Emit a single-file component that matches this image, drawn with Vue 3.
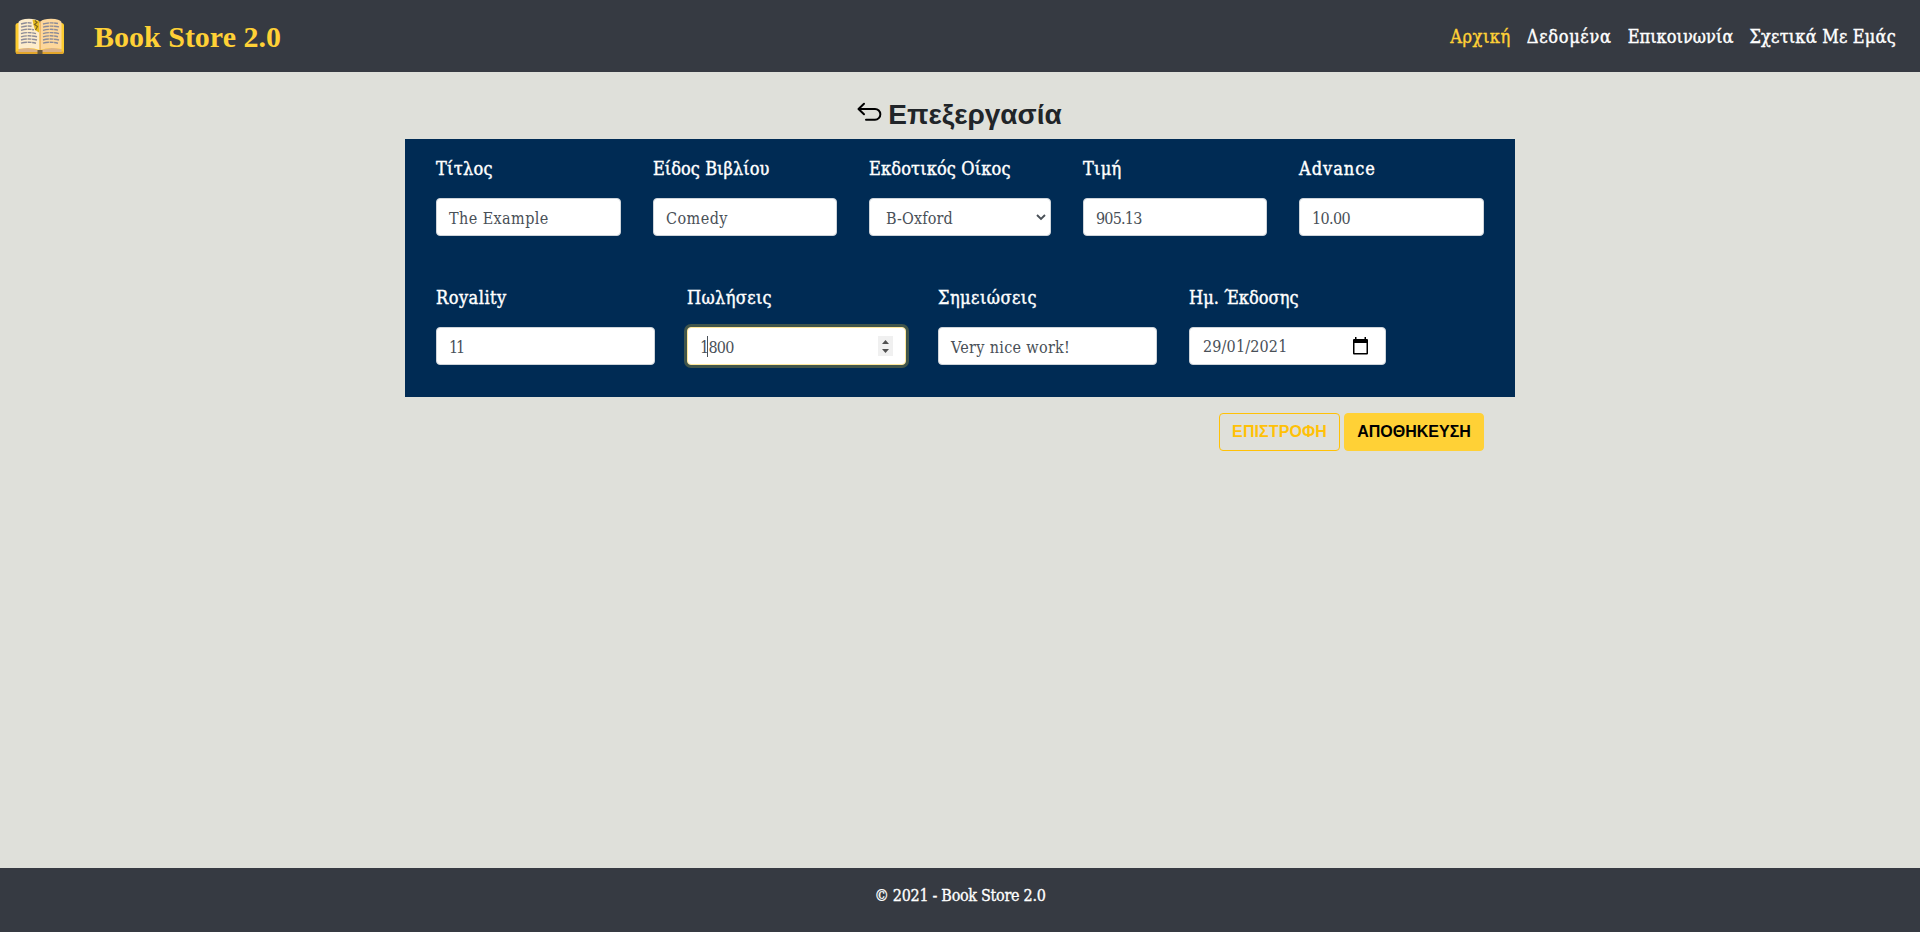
<script setup>
const links = [
  { text: 'Αρχική', active: true, track: 0.55 },
  { text: 'Δεδομένα', track: 0.7 },
  { text: 'Επικοινωνία', track: 0.05 },
  { text: 'Σχετικά Με Εμάς', track: 0.2 }
]

const rows = [
  {
    name: 'first',
    fields: [
      { label: 'Τίτλος', track: 0.3, value: 'The Example', vtrack: 0.42 },
      { label: 'Είδος Βιβλίου', track: 0.05, value: 'Comedy', vtrack: 0.45 },
      { label: 'Εκδοτικός Οίκος', track: 0.15, value: 'B-Oxford', vtrack: 0.15, kind: 'select' },
      { label: 'Τιμή', track: 0.3, value: '905.13', vtrack: -0.8 },
      { label: 'Advance', track: 0.98, value: '10.00', vtrack: -0.65 }
    ]
  },
  {
    name: 'second',
    fields: [
      { label: 'Royality', track: 0.5, value: '11', vtrack: -2.2 },
      { label: 'Πωλήσεις', track: 0.36, value: '1800', vtrack: -0.75, kind: 'number' },
      { label: 'Σημειώσεις', track: 0.46, value: 'Very nice work!', vtrack: 0.32 },
      { label: 'Ημ. Έκδοσης', track: 0.06, value: '29/01/2021', vtrack: 0.15, kind: 'date' }
    ]
  }
]
</script>

<template>
  <div class="page">
    <header class="navbar">
      <div class="brand">
        <svg class="book" width="50" height="37" viewBox="0 0 50 37">
          <rect x="0.5" y="5" width="48.500" height="31" rx="2.5" fill="#fccb2f" />
          <path d="M1 33.5h47.500v1q0 1.500-1.500 1.500H2.500Q1 36 1 34.500z" fill="#e3a62b" />
          <path d="M3.500 31.500Q14 28 24.500 33 35 28 46.500 31.500V34H3.500z" fill="#d9b18a" />
          <path d="M3.500 4Q5 1 14 .8 21.500.8 24.500 3.500V32Q16 28.500 3.500 31z" fill="#fdeccb" />
          <path d="M46.500 4Q45 1 36 .8 28 .8 25.500 3.500V32Q34 28.500 46.500 31z" fill="#fdd79b" />
          <path d="M24.500 3.500h1.500V32h-1.500z" fill="#edb96c" />
          <g fill="none" stroke="#8d8c98" stroke-width="1.400" stroke-dasharray="6 .7 4 .6">
            <path d="M6 6q6-2 11-.8M6 9.200q6-2 11-.8M6 12.400q6-2 13-.6M6 15.600q7-2 15 0M6 18.800q7-2 16 0M6 22q7-2 16 0M6 25.200q7-2 15 0" />
            <path d="M28 6q7-2 15-.5M28 9.200q7-2 16-.3M28 12.400q7-2 15-.3M28 15.600q7-2 16 0M28 18.800q7-2 15 0M28 22q7-2 16 0M28 25.200q7-2 15 0" />
          </g>
          <path d="M17.500 1.500l6.500 1.500v11.500l-4-2.500-1.500-5z" fill="#e8bd20" />
          <path d="M20 2.500l2 2-2.500 2 3 2-2 3.500" fill="none" stroke="#80681e" stroke-width="1.200" />
          <rect x="22.500" y="32" width="5" height="4" fill="#67573a" />
        </svg>
        <span class="brand-name">Book Store 2.0</span>
      </div>
      <nav class="links">
        <a
          v-for="link in links"
          :key="link.text"
          :class="{ active: link.active }"
          :style="{ letterSpacing: link.track + 'px' }"
        >{{ link.text }}</a>
      </nav>
    </header>

    <main class="container">
      <h1 class="title">
        <svg class="back" width="25" height="20" viewBox="0 0 25 20">
          <path d="M7 1.700L1.500 7 7 12.300M1.800 7H18a5.300 5.300 0 0 1 0 10.700H9" />
        </svg>
        <span>Επεξεργασία</span>
      </h1>

      <form class="panel">
        <div v-for="row in rows" :key="row.name" class="row" :class="row.name">
          <div v-for="f in row.fields" :key="f.label" class="field">
            <label :style="{ letterSpacing: f.track + 'px' }">{{ f.label }}</label>
            <div class="control" :class="f.kind">
              <span class="value" :style="{ letterSpacing: f.vtrack + 'px' }">{{ f.value }}</span>
              <svg v-if="f.kind === 'select'" class="chevron" width="10" height="7" viewBox="0 0 10 7">
                <path d="M1 1l4 4 4-4" fill="none" stroke="#495057" stroke-width="1.900" />
              </svg>
              <template v-if="f.kind === 'number'">
                <i class="caret"></i>
                <svg class="spinner" width="15" height="20" viewBox="0 0 15 20">
                  <rect width="15" height="20" fill="#f0f0f0" />
                  <path d="M4 8l3.500-4L11 8zM4 13h7l-3.500 4z" fill="#505050" />
                </svg>
              </template>
              <svg v-if="f.kind === 'date'" class="calendar" width="15" height="18" viewBox="0 0 15 18">
                <path d="M2 0h1.500v2h8V0H13v2h1q1 0 1 1v13.500q0 1-1 1H1q-1 0-1-1V3q0-1 1-1h1zM1.500 6v10h12V6z" fill="#000" fill-rule="evenodd" />
              </svg>
            </div>
          </div>
        </div>
      </form>

      <div class="actions">
        <button class="btn outline" type="button">ΕΠΙΣΤΡΟΦΗ</button>
        <button class="btn solid" type="button">ΑΠΟΘΗΚΕΥΣΗ</button>
      </div>
    </main>

    <footer class="footer">© 2021 - Book Store 2.0</footer>
  </div>
</template>

<style>
body {
  background: #dfe0da;
}
</style>

<style scoped>
.page {
  box-sizing: border-box;
  height: 932px;
  display: flex;
  flex-direction: column;
  background: #dfe0da;
  font-family: "Roboto Slab", "DejaVu Serif Condensed", "DejaVu Serif", serif;
  font-stretch: condensed;
}
.navbar {
  box-sizing: border-box;
  height: 72px;
  padding: 0 24px 0 15px;
  display: flex;
  align-items: center;
  justify-content: space-between;
  background: #363a42;
}
.brand {
  display: flex;
  align-items: center;
  gap: 29px;
}
.brand-name {
  font: 700 30px/40px "Liberation Serif", serif;
  color: #ffd136;
  padding-top: 2px;
}
.links {
  display: flex;
  gap: 16px;
  padding-top: 1px;
  font-size: 18px;
  line-height: 27px;
  color: #fff;
  -webkit-text-stroke: 0.4px currentColor;
}
.links .active {
  color: #ffd136;
}
.container {
  width: 1110px;
  margin: 0 auto;
  flex: 1;
}
.title {
  margin: 0;
  height: 67px;
  padding: 26px 1px 0 0;
  box-sizing: border-box;
  display: flex;
  justify-content: center;
  gap: 6px;
  font: 700 28px/34px "Liberation Sans", sans-serif;
  color: #212529;
}
.back {
  margin-top: 4px;
  fill: none;
  stroke: #000;
  stroke-width: 2;
  stroke-linecap: round;
  stroke-linejoin: round;
}
.panel {
  box-sizing: border-box;
  height: 258px;
  padding: 16px 31px 0;
  background: #002b54;
}
.row {
  display: grid;
  column-gap: 32px;
  height: 129px;
}
.first {
  grid-template-columns: 185px 184px 182px 184px 185px;
}
.second {
  grid-template-columns: 219px 219px 219px 197px;
}
.field label {
  display: block;
  height: 43px;
  line-height: 27px;
  font-size: 18px;
  color: #fff;
  white-space: nowrap;
  -webkit-text-stroke: 0.4px currentColor;
}
.control {
  position: relative;
  box-sizing: border-box;
  height: 38px;
  padding: 0 12px;
  display: flex;
  align-items: center;
  justify-content: space-between;
  background: #fff;
  border: 1px solid #ced4da;
  border-radius: 4px;
  font-size: 16px;
  line-height: 24px;
  color: #495057;
}
.value {
  padding-top: 3px;
}
.select {
  padding: 0 4px 0 16px;
}
.number {
  border-color: #ffe89c;
  box-shadow: 0 0 0 3px #40554b;
  padding-right: 12px;
}
.date {
  padding: 0 17px 0 13px;
}
.date .value {
  padding-top: 1px;
}
.caret {
  position: absolute;
  left: 19px;
  top: 8px;
  width: 1px;
  height: 21px;
  background: #495057;
}
.actions {
  display: flex;
  justify-content: flex-end;
  gap: 4px;
  padding: 16px 31px 0 0;
}
.btn {
  box-sizing: border-box;
  height: 38px;
  padding: 0;
  border-radius: 4px;
  font: 700 16px/24px "Liberation Sans", sans-serif;
}
.outline {
  width: 121px;
  border: 1px solid #ffc107;
  background: transparent;
  color: #ffc107;
  letter-spacing: 0.1px;
}
.solid {
  width: 140px;
  border: 1px solid #ffd136;
  background: #ffd136;
  color: #000;
}
.footer {
  box-sizing: border-box;
  height: 64px;
  padding-top: 16px;
  background: #363a42;
  color: #fff;
  font-size: 16px;
  letter-spacing: -0.3px;
  line-height: 24px;
  text-align: center;
  -webkit-text-stroke: 0.3px currentColor;
}
</style>
